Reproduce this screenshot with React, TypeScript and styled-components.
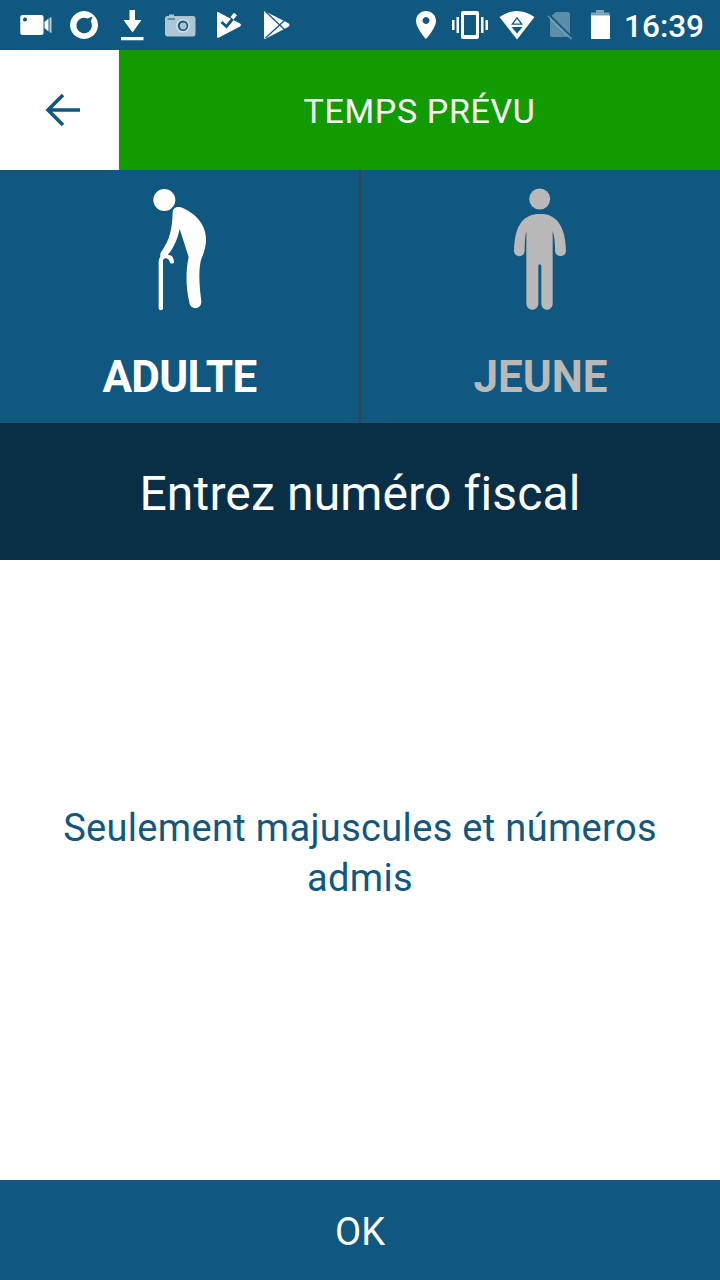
import React from 'react';
import styled, { createGlobalStyle } from 'styled-components';

const colors = { blue: '#115881', navy: '#082f45', green: '#119b00', muted: '#b9b9b9' };

const GlobalStyle = createGlobalStyle`
  * { box-sizing: border-box; }
  body { margin: 0; font-family: Roboto, sans-serif; }
`;

const Screen = styled.div`
  display: flex;
  flex-direction: column;
  width: 720px;
  height: 1280px;
  background: #fff;
  overflow: hidden;
  font-variant-ligatures: none;
`;

const StatusBar = styled.div`
  display: flex;
  justify-content: space-between;
  flex: 0 0 50px;
  padding: 0 16px 0 12px;
  background: ${colors.blue};
  color: #fff;
`;

const IconGroup = styled.div`
  display: flex;
  align-items: center;
`;

const StatusSvg = styled.svg<{ $w: number }>`
  display: block;
  width: ${(p) => p.$w}px;
  height: 50px;
`;

const Clock = styled.time`
  display: flex;
  justify-content: flex-end;
  width: 79px;
  margin-left: 13px;
  padding-top: 4px;
  font-size: 31.500px;
  font-weight: 500;
  line-height: 46px;
  white-space: nowrap;
`;

const Header = styled.header`
  display: flex;
  flex: 0 0 120px;
`;

const BackButton = styled.button`
  display: flex;
  align-items: center;
  width: 119px;
  padding: 0 0 0 42px;
  border: 0;
  background: #fff;
`;

const Title = styled.h1`
  display: flex;
  flex: 1;
  align-items: center;
  justify-content: center;
  margin: 0;
  padding-top: 2px;
  background: ${colors.green};
  color: #fff;
  font-size: 34px;
  font-weight: 400;
  letter-spacing: 0.65px;
`;

const Tabs = styled.div`
  display: flex;
  flex: 0 0 253px;
  background: ${colors.blue};
`;

const Tab = styled.button<{ $active?: boolean }>`
  display: flex;
  flex: 1;
  flex-direction: column;
  align-items: center;
  padding: 5px 0 0;
  border: 0;
  background: none;
  color: ${(p) => (p.$active ? '#fff' : colors.muted)};
  font-family: inherit;
`;

const TabDivider = styled.div`
  width: 2px;
  background: #38454f;
`;

const Figure = styled.svg<{ $nudge: string }>`
  display: block;
  width: 100px;
  height: 145px;
  margin: ${(p) => p.$nudge};
`;

const TabLabel = styled.span<{ $tight?: boolean }>`
  margin-top: 31px;
  font-size: 44px;
  font-weight: 700;
  line-height: 52px;
  letter-spacing: ${(p) => (p.$tight ? '-0.65px' : '0')};
`;

const Prompt = styled.h2`
  display: flex;
  flex: 0 0 137px;
  align-items: center;
  justify-content: center;
  margin: 0;
  padding-top: 4px;
  background: ${colors.navy};
  color: #fff;
  font-size: 48px;
  font-weight: 400;
  letter-spacing: 0.15px;
`;

const Content = styled.main`
  display: flex;
  flex: 1;
  align-items: center;
  justify-content: center;
  padding: 0 40px 34px;
`;

const Hint = styled.p`
  margin: 0;
  color: ${colors.blue};
  font-size: 38px;
  line-height: 50px;
  letter-spacing: 0.33px;
  text-align: center;
`;

const ConfirmButton = styled.button`
  flex: 0 0 100px;
  padding: 4px 0 0;
  border: 0;
  background: ${colors.blue};
  color: #fff;
  font-family: inherit;
  font-size: 38px;
`;

const NotificationIcons = () => (
  <StatusSvg $w={288} viewBox="12 0 288 50" fill="#fff">
    <path fillRule="evenodd" d="M22.500 15H41.500Q43.500 15 43.500 17V33Q43.500 35 41.500 35H22.500Q20.300 35 20.300 33V17Q20.300 15 22.500 15ZM25 17.500a2 2 0 1 0 .01 0Z" />
    <path d="M44.500 22L48.500 18.500V31.500L44.500 28Z" />
    <path d="M49.500 18L51.500 17V33L49.500 32Z" opacity=".7" />
    <path fillRule="evenodd" d="M84 11a14 14 0 1 0 .01 0ZM87.500 18.500L92.500 16.500L90.800 21.500A7.700 7.700 0 1 1 87.500 18.500Z" />
    <path d="M129.500 10H135V20H141.500L132.500 32.500L123.500 20H129.500ZM121 37H143.500V40.300H121Z" />
    <g opacity=".66">
      <path d="M169 14.500H174V16H193Q195.500 16 195.500 18.500V33.500Q195.500 36.500 193 36.500H167.500Q165 36.500 165 33.500V18.500Q165 16 167.500 16H169Z" />
      <path d="M167.500 19H175" stroke={colors.blue} strokeWidth="1" />
    </g>
    <circle cx="183" cy="25.800" r="7" opacity=".4" />
    <circle cx="183" cy="25.800" r="5.200" fill={colors.blue} />
    <circle cx="183.200" cy="26" r="3.400" opacity=".65" />
    <path d="M218 12L240 23.500Q242 25 240 26.500L219 37.500Q217 38.500 217 36.500V13Q217 11.500 218 12Z" />
    <path d="M221.500 22L226.500 26.500L235.500 15.500" fill="none" stroke={colors.blue} strokeWidth="2.800" />
    <path d="M230.500 17L234 12.800L237 15.300L233.500 19.500Z" />
    <path d="M265 11.200L288 23Q291 25 288 27L265 39Q264 39.200 264 38V12.500Q264 11 265 11.200Z" />
    <path d="M265.500 11.500L286 31M265.500 38L285 20" fill="none" stroke={colors.blue} strokeWidth="1.300" />
  </StatusSvg>
);

const SystemIcons = () => (
  <StatusSvg $w={202} viewBox="410 0 202 50" fill="#fff">
    <path fillRule="evenodd" d="M426 11C420.400 11 416 15.400 416 21C416 28 426 39 426 39S436 28 436 21C436 15.400 431.600 11 426 11ZM426 17a3.500 3.500 0 1 0 .01 0Z" />
    <path fillRule="evenodd" d="M463 11H477Q479 11 479 13V37Q479 39 477 39H463Q461 39 461 37V13Q461 11 463 11ZM464 15V35H476V15Z" />
    <path d="M452 20H454.500V30H452ZM456.500 17H459V33H456.500ZM481 17H483.500V33H481ZM485.500 20H488V30H485.500Z" />
    <path d="M499.500 17Q517 5 534.500 17L517 39.500Z" />
    <path d="M512.300 24.200H521.700L517 17.800Z" fill="none" stroke={colors.blue} strokeWidth="1.300" />
    <path d="M511.500 27H522.500L517 33.500Z" fill={colors.blue} />
    <path d="M556 12H567.500Q570 12 570 14.500V34L551.500 15.800ZM550 18L569 37H552Q550 37 550 35Z" opacity=".32" />
    <path d="M547.800 15.800L571.500 39" fill="none" stroke="#fff" strokeWidth="1.800" opacity=".3" />
    <path d="M596 10H604V12.500H609.500V16H591V12.500H596Z" opacity=".45" />
    <path d="M591 15.500H610V39H591Z" />
  </StatusSvg>
);

const ElderFigure = () => (
  <Figure $nudge="0 0 0 1px" viewBox="0 0 300 435" fill="currentColor">
    <circle cx="103" cy="75" r="33" />
    <path d="M128 111C129 97 145 91 160 100C196 116 226 147 228 190C229 212 221 237 213 254C207 280 207 310 210 345L214 380C214 404 181 407 178 382C168 338 166 294 176 246L149 162C142 194 130 221 113 240C128 238 131 251 132 259C133 267 121 268 119 260C116 248 104 246 99 255V399C99 408 86 408 86 399V260C86 251 92 248 91 241C90 236 92 232 96 227C119 195 127 161 128 111Z" />
  </Figure>
);

const YouthFigure = () => (
  <Figure $nudge="0 1px 0 0" viewBox="0 0 300 435" fill="currentColor">
    <circle cx="149" cy="72" r="31.500" />
    <path d="M149 117C193 115 226 145 228 227C228 248 196 249 195 227C195 202 193 183 188 168V385C188 411 154 411 154 385V274C154 266 145 266 145 274V385C145 411 109 411 109 385V168C105 183 104 202 104 227C104 249 72 249 72 227C74 147 103 117 149 117Z" />
  </Figure>
);

export default function App() {
  return (
    <>
      <GlobalStyle />
      <Screen>
        <StatusBar>
          <IconGroup><NotificationIcons /></IconGroup>
          <IconGroup>
            <SystemIcons />
            <Clock>16:39</Clock>
          </IconGroup>
        </StatusBar>
        <Header>
          <BackButton aria-label="Retour">
            <svg width="42" height="42" viewBox="42 89 42 42" fill="none" stroke={colors.blue} strokeWidth="3.600">
              <path d="M80 110H48M63 95L48 110L63 125" />
            </svg>
          </BackButton>
          <Title>TEMPS PRÉVU</Title>
        </Header>
        <Tabs>
          <Tab $active><ElderFigure /><TabLabel $tight>ADULTE</TabLabel></Tab>
          <TabDivider />
          <Tab><YouthFigure /><TabLabel>JEUNE</TabLabel></Tab>
        </Tabs>
        <Prompt>Entrez numéro fiscal</Prompt>
        <Content><Hint>Seulement majuscules et números admis</Hint></Content>
        <ConfirmButton>OK</ConfirmButton>
      </Screen>
    </>
  );
}
